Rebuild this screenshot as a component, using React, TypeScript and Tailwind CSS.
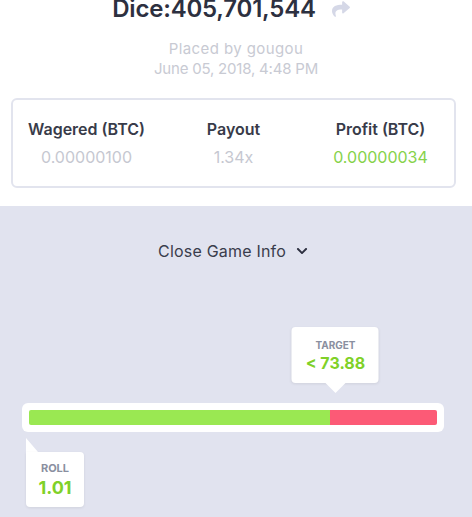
import { FaChevronDown, FaShare } from "react-icons/fa";

const font = { fontFamily: "Inter, 'Liberation Sans', sans-serif" };

const stats = [
  { label: "Wagered (BTC)", value: "0.00000100", tone: "text-[#c6c8d1]" },
  { label: "Payout", value: "1.34x", tone: "text-[#c6c8d1]" },
  { label: "Profit (BTC)", value: "0.00000034", tone: "text-[#86d24a]" },
];

const target = 73.88;

export default function App() {
  return (
    <div className="h-[517px] w-[472px] overflow-hidden bg-white" style={font}>
      <div className="flex h-[206px] flex-col items-center">
        <div className="-mt-[3px] flex items-center gap-[14px] pr-[8px]">
          <h1 className="text-[24px] font-semibold leading-[24px] tracking-[-0.2px] text-[#2d3040]">
            Dice:405,701,544
          </h1>
          <FaShare className="h-[18px] w-[22px] text-[#d5d8e7]" />
        </div>
        <div className="mt-[18px] flex flex-col items-center text-[15px] leading-[20px] text-[#c8cad3]">
          <span className="tracking-[0.4px]">Placed by gougou</span>
          <span className="tracking-[-0.2px]">June 05, 2018, 4:48 PM</span>
        </div>
        <div className="ml-[11px] mt-[19px] grid h-[90px] w-[445px] self-start grid-cols-3 rounded-[6px] border-2 border-[#e2e4ee] pt-[19px]">
          {stats.map((s) => (
            <div key={s.label} className="flex flex-col items-center">
              <span className="text-[16px] font-semibold leading-[20px] text-[#383b49]">
                {s.label}
              </span>
              <span className={`mt-[8px] text-[16px] leading-[20px] ${s.tone}`}>
                {s.value}
              </span>
            </div>
          ))}
        </div>
      </div>
      <div className="flex h-[311px] flex-col bg-[#e1e3ef]">
        <button className="mt-[35px] flex items-center justify-center gap-[10px] pr-[6px] text-[16px] leading-[20px] tracking-[0.2px] text-[#3a3d4c]">
          Close Game Info
          <FaChevronDown className="h-[12px] w-[12px] text-[#2d3040]" />
        </button>
        <div className="ml-[22px] mt-[142px] w-[422px] rounded-[6px] bg-white p-[7px]">
          <div className="relative flex h-[15px]">
            <div className="rounded-l-[2px] bg-[#9ae852]" style={{ width: `${target}%` }} />
            <div className="flex-1 rounded-r-[2px] bg-[#fc5a76]" />
            <div
              className="absolute bottom-[32px] flex -translate-x-1/2 flex-col items-center"
              style={{ left: `calc(${target}% + 5px)` }}
            >
              <div className="flex h-[56px] w-[87px] flex-col items-center justify-center rounded-[4px] bg-white shadow-[0_1px_3px_rgba(0,0,0,0.08)]">
                <span className="text-[10px] font-bold leading-[12px] text-[#8a8fa0]">TARGET</span>
                <span className="mt-[3px] text-[16px] font-bold leading-[18px] text-[#7fd129]">
                  &lt; 73.88
                </span>
              </div>
              <div className="h-0 w-0 border-x-[10px] border-t-[10px] border-x-transparent border-t-white" />
            </div>
            <div className="absolute left-[-3px] top-[28px] flex flex-col items-start">
              <div className="h-0 w-0 border-b-[14px] border-r-[12px] border-b-white border-r-transparent" />
              <div className="flex h-[55px] w-[58px] flex-col items-center justify-center rounded-[4px] rounded-tl-none bg-white shadow-[0_1px_3px_rgba(0,0,0,0.08)]">
                <span className="text-[11px] font-bold leading-[13px] text-[#8a8fa0]">ROLL</span>
                <span className="mt-[3px] text-[18px] font-bold leading-[20px] text-[#7fd129]">1.01</span>
              </div>
            </div>
          </div>
        </div>
      </div>
    </div>
  );
}
